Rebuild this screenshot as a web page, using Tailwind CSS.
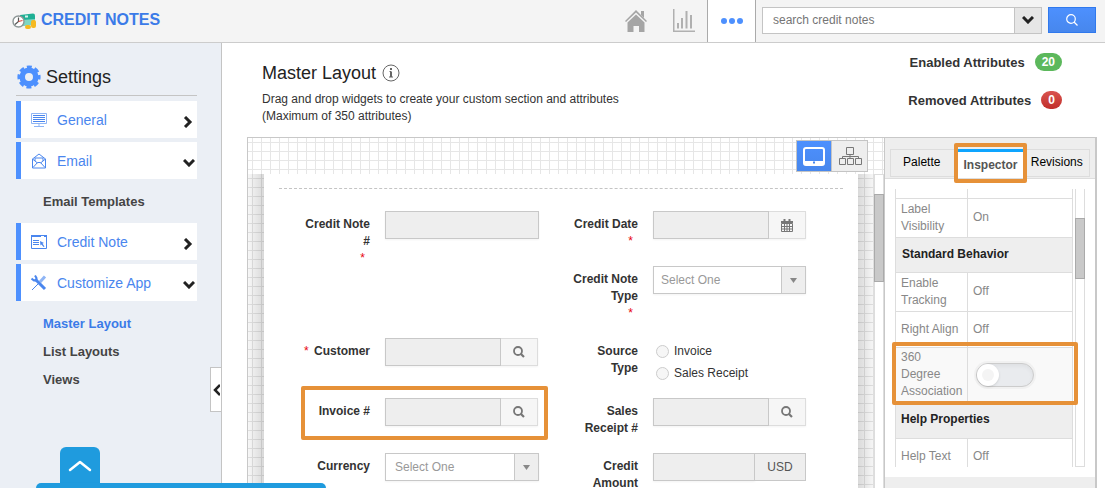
<!DOCTYPE html>
<html lang="en">
<head>
    <meta charset="UTF-8">
    <meta name="viewport" content="width=device-width, initial-scale=1.0">
    <title>Credit Notes - Master Layout</title>
    <script src="https://cdn.jsdelivr.net/npm/@tailwindcss/browser@4"></script>
</head>
<body class="h-screen overflow-hidden flex flex-col bg-white font-['Liberation_Sans',Arial,sans-serif] text-xs leading-[17px] text-[#333]">
    <!-- Header -->
    <header class="shrink-0 h-[43px] flex items-center bg-[#f4f4f4] border-b border-[#ccc] pr-[9px]">
        <a href="#" class="flex items-center gap-1 pl-3 pb-0.5 text-base font-bold text-[#3b7be8]">
            <svg class="w-[25px] h-[18px] mt-0.5" viewBox="0 0 25 18">
                <path d="M8 3l13-1.500q2 0 2 2V12l-14 2z" fill="#1fb095"/>
                <path d="M10 8l13-1v6l-13 1z" fill="#7ed6c3"/>
                <path d="M13 3.500h3v2h-3z" fill="#d8f3ec"/>
                <circle cx="6.500" cy="9.500" r="5.500" fill="#fff" stroke="#8d9696" stroke-width="1.400"/>
                <path d="M6.500 5.500v4L3 12.500" fill="none" stroke="#555" stroke-width="1.200"/>
                <path d="M6.500 9.500l4-1" stroke="#e0483e" stroke-width="1.200"/>
                <rect x="19" y="8" width="5" height="8" rx="2" fill="#f5b921"/>
                <rect x="13" y="13" width="6" height="4" rx="2" fill="#f5b921"/>
            </svg>
            CREDIT NOTES
        </a>
        <nav class="ml-auto flex h-full items-center">
            <a href="#" aria-label="Home" class="mr-6">
                <svg class="w-6 h-6" viewBox="0 0 24 24" fill="#a5a5a5">
                    <path d="M17 2h3v7l-3-3z"/>
                    <path d="M12 1L1 12l1 1L12 3.500 22 13l1-1z"/>
                    <path d="M3.500 13.500L12 5.500l8.500 8V23H15v-6H9.500v6h-6z"/>
                </svg>
            </a>
            <a href="#" aria-label="Reports" class="mr-[11px]">
                <svg class="w-6 h-6" viewBox="0 0 24 24" fill="#b0b0b0">
                    <path d="M1 0h1.500v21.500H23V23H1zM5 14h2v5.500H5zM9 9h2v10.500H9zM13.500 2h2v17.500h-2zM18 6h2v13.500h-2z"/>
                </svg>
            </a>
            <a href="#" aria-label="More" class="w-[49px] h-full flex items-center justify-center gap-0.5 bg-white border-x border-[#aaa]">
                <span class="size-1.5 rounded-full bg-[#4d90fe]"></span>
                <span class="size-1.5 rounded-full bg-[#4d90fe]"></span>
                <span class="size-1.5 rounded-full bg-[#4d90fe]"></span>
            </a>
        </nav>
        <form class="flex items-center ml-1.5 pb-0.5">
            <input type="text" aria-label="Search" placeholder="search credit notes" class="w-[253px] h-[27px] pl-2.5 bg-white border border-[#c4c4c4] placeholder:text-[#757575]">
            <button type="button" aria-label="Search options" class="w-7 h-[27px] -ml-px grid place-items-center bg-[#e6e6e6] border border-[#c4c4c4]">
                <svg class="w-3 h-2" viewBox="0 0 12 8" fill="none" stroke="#222" stroke-width="3"><path d="M1 1l5 5 5-5"/></svg>
            </button>
            <button type="submit" aria-label="Go" class="ml-1.5 w-12 h-[26px] grid place-items-center border border-[#3079ed] bg-linear-to-b from-[#4d90fe] to-[#4787ed]">
                <svg class="w-3 h-3" viewBox="0 0 12 12" fill="none" stroke="#fff" stroke-width="1.200"><circle cx="5" cy="5" r="4.300"/><path d="M8 8l3.500 3.500"/></svg>
            </button>
        </form>
    </header>

    <div class="flex-1 min-h-0 flex">
        <!-- Sidebar -->
        <aside class="relative shrink-0 w-[222px] bg-[#ebeff5] border-r border-[#c4c4c4] pl-4 pr-6 pt-5">
            <h2 class="flex items-center gap-1 h-[33px] pb-1 mb-[5px] border-b border-[#c4c4c4] text-lg text-[#222]">
                <svg class="w-[26px] h-6" viewBox="0 0 24 24" fill="none">
                    <circle cx="12" cy="12" r="6.800" stroke="#4d90fe" stroke-width="5.600"/>
                    <circle cx="12" cy="12" r="9.800" stroke="#4d90fe" stroke-width="3.600" stroke-dasharray="4.800 2.897" stroke-dashoffset="2.400"/>
                </svg>
                Settings
            </h2>
            <nav class="flex flex-col gap-1">
                <a href="#" class="h-[37px] flex items-center bg-white border-l-5 border-[#4d90fe] pl-2.5 pr-1 text-sm text-[#4a86ee]">
                    <svg class="w-4 h-4 mr-2.5" viewBox="0 0 16 16" fill="none" stroke="#4a86ee"><path d="M.5 1.500h15v10H.5z" stroke="#8fb5f5"/><path d="M2 3.500h12M2 5.500h12M2 7.500h12M2 9.500h12"/><path d="M8 12v2.500M3 14.500h10" stroke="#8fb5f5"/></svg>
                    General
                    <svg class="w-2.5 h-3 ml-auto mt-1" viewBox="0 0 10 12" fill="none" stroke="#222" stroke-width="3"><path d="M2 1l5 5-5 5"/></svg>
                </a>
                <a href="#" class="h-[37px] flex items-center bg-white border-l-5 border-[#4d90fe] pl-2.5 pr-1 text-sm text-[#4a86ee]">
                    <svg class="w-4 h-4 mr-2.5" viewBox="0 0 16 16" fill="none" stroke="#4a86ee"><path d="M1.500 6v9h13V6L8 1zM1.500 6l5 4M14.500 6l-5 4M2 14.500l4.500-5h3l4.500 5M4 8V5h8v3"/></svg>
                    Email
                    <svg class="w-3 h-2 ml-auto mt-1 -mr-0.5" viewBox="0 0 12 8" fill="none" stroke="#222" stroke-width="3"><path d="M1 1l5 5 5-5"/></svg>
                </a>
                <a href="#" class="h-9 flex items-center pl-[27px] text-[13px] font-bold text-[#444]">Email Templates</a>
                <a href="#" class="h-[37px] flex items-center bg-white border-l-5 border-[#4d90fe] pl-2.5 pr-1 text-sm text-[#4a86ee]">
                    <svg class="w-4 h-4 mr-2.5" viewBox="0 0 16 16" fill="none" stroke="#4a86ee"><path d="M.5 1.500h15v13H.5z"/><path d="M0 2h10M13 2h3" stroke-width="2"/><path d="M2 6.500h6M2 8.500h6M2 10.500h6"/><path d="M9 7l4 2-1.500.5 2 3-1 .5-2-2.500-1 1z" fill="#4a86ee" stroke="none"/></svg>
                    Credit Note
                    <svg class="w-2.5 h-3 ml-auto mt-1" viewBox="0 0 10 12" fill="none" stroke="#222" stroke-width="3"><path d="M2 1l5 5-5 5"/></svg>
                </a>
                <a href="#" class="h-[37px] flex items-center bg-white border-l-5 border-[#4d90fe] pl-2.5 pr-1 text-sm text-[#4a86ee]">
                    <svg class="w-4 h-4 mr-2.5" viewBox="0 0 16 16" fill="none" stroke="#4a86ee"><path d="M9 7l5-5.500" stroke-width="3" stroke="#8fb5f5"/><path d="M1 15l8-8"/><path d="M4 4l10 10" stroke-width="3"/><path d="M.5 3.500L3 5.500h2.500V3L4 .5" stroke-width="2"/></svg>
                    Customize App
                    <svg class="w-3 h-2 ml-auto mt-1 -mr-0.5" viewBox="0 0 12 8" fill="none" stroke="#222" stroke-width="3"><path d="M1 1l5 5 5-5"/></svg>
                </a>
            </nav>
            <nav class="flex flex-col pl-[27px] pt-2 text-[13px] font-bold text-[#444]">
                <a href="#" class="h-7 flex items-center text-[#3b7be8]">Master Layout</a>
                <a href="#" class="h-7 flex items-center">List Layouts</a>
                <a href="#" class="h-7 flex items-center">Views</a>
            </nav>
            <button type="button" aria-label="Collapse sidebar" class="absolute right-0 top-[324px] w-[11px] h-[45px] grid place-items-center bg-white border border-r-0 border-[#c4c4c4]">
                <svg class="w-2 h-3" viewBox="0 0 8 12" fill="none" stroke="#222" stroke-width="2.500"><path d="M8 1L3 6l5 5"/></svg>
            </button>
        </aside>

        <!-- Main -->
        <main class="flex-1 min-w-0 flex flex-col pl-[25px] pr-2">
            <div class="h-[94px] shrink-0 flex justify-between pl-[15px] pr-[35px]">
                <div class="pt-5">
                    <h1 class="flex items-center gap-1.5 text-lg leading-5 text-[#222] mb-2">
                        Master Layout
                        <svg class="w-[18px] h-[18px]" viewBox="0 0 18 18" fill="none" stroke="#666"><circle cx="9" cy="9" r="8"/><path d="M9 7.500V13" stroke-width="2"/><path d="M7.500 7.500H9M7 13h4"/><path d="M8 5h2" stroke-width="2"/></svg>
                    </h1>
                    <p>Drag and drop widgets to create your custom section and attributes<br>(Maximum of 350 attributes)</p>
                </div>
                <div class="pt-2.5 flex flex-col gap-5 text-[13px] font-bold">
                    <div class="flex items-center justify-end gap-2.5 h-[18px]">Enabled Attributes <span class="h-[18px] px-[7px] rounded-full bg-[#5cb85c] text-xs text-white leading-[18px]">20</span></div>
                    <div class="flex items-center justify-end gap-2.5 h-[18px]">Removed Attributes <span class="h-[18px] px-[7px] rounded-full bg-linear-to-b from-[#d9534f] to-[#c12e2a] text-xs text-white leading-[18px]">0</span></div>
                </div>
            </div>

            <div class="flex-1 min-h-0 flex border border-b-0 border-r-2 border-[#c8c8c8]">
                <!-- Canvas -->
                <section class="relative flex-1 min-w-0 flex bg-white bg-[linear-gradient(to_right,#e6e6e6_1px,transparent_1px),linear-gradient(#e6e6e6_1px,transparent_1px)] bg-size-[9px_9px] bg-position-[4px_4px]">
                    <div class="absolute right-4 top-[2px] flex">
                        <button type="button" aria-label="Device view" class="w-9 h-8 grid place-items-center border border-[#c4c4c4] bg-linear-to-b from-[#4d90fe] to-[#4787ed]">
                            <svg class="w-[22px] h-[19px]" viewBox="0 0 22 19" fill="none" stroke="#fff" stroke-width="2"><rect x="1" y="1" width="20" height="17" rx="2"/><path d="M2 15.500h18" stroke-width="3"/><path d="M10 15.500h2" stroke="#4787ed"/></svg>
                        </button>
                        <button type="button" aria-label="Tree view" class="w-9 h-8 grid place-items-center border border-l-0 border-[#c4c4c4] bg-[#eee]">
                            <svg class="w-6 h-5" viewBox="0 0 24 20" fill="none" stroke="#777"><path d="M8.500 1.500h7v7h-7zM1.500 12.500h6v6h-6zM9.500 12.500h6v6h-6zM17.500 12.500h6v6h-6zM12 8.500v4M4.500 12.500v-2h16v2"/></svg>
                        </button>
                    </div>
                    <div class="w-4 mt-9 shrink-0 bg-linear-to-r from-black/3 to-black/15"></div>
                    <!-- Form sheet -->
                    <div class="flex-1 min-w-0 mt-9 px-[15px] bg-white overflow-hidden">
                        <div class="mt-[14px] mb-[22px] border-t border-dashed border-[#c4c4c4]"></div>
                        <div class="grid grid-cols-2 pr-7">
                            <div class="flex gap-[15px] pl-[25px] min-h-[55px]">
                                <label for="cn-number" class="w-[66px] pt-[5px] text-right font-bold">Credit Note #<span class="block pr-[5px] leading-4 font-normal text-red-600">*</span></label>
                                <input id="cn-number" type="text" class="w-[154px] h-7 bg-[#eee] border border-[#c8c8c8] shadow-xs">
                            </div>
                            <div class="flex gap-[15px] pl-[25px] min-h-[55px]">
                                <label for="cn-date" class="w-[66px] pt-[5px] text-right font-bold whitespace-nowrap">Credit Date<span class="block pr-[5px] leading-4 font-normal text-red-600">*</span></label>
                                <div class="flex h-7 shadow-xs">
                                    <input id="cn-date" type="text" class="w-[116px] h-7 bg-[#eee] border border-[#c8c8c8]">
                                    <button type="button" aria-label="Pick date" class="w-[37px] h-7 grid place-items-center bg-[#f6f6f6] border border-l-0 border-[#ddd]">
                                        <svg class="w-3 h-[13px]" viewBox="0 0 12 13" fill="none" stroke="#777"><path d="M.5 4.500h11v8H.5zM3.500 5v7M6 5v7M8.500 5v7M1 7.500h10M1 10h10"/><path d="M0 3h12" stroke-width="2"/><path d="M3.500 0v3M8.500 0v3" stroke-width="2"/></svg>
                                    </button>
                                </div>
                            </div>

                            <div class="col-start-2 flex gap-[15px] pl-[25px] min-h-[72px]">
                                <label for="cn-type" class="w-[66px] pt-[5px] text-right font-bold">Credit Note Type<span class="block pr-[5px] leading-4 font-normal text-red-600">*</span></label>
                                <div class="relative w-[153px] h-7">
                                    <select id="cn-type" class="appearance-none w-full h-7 pl-[7px] bg-white border border-[#c8c8c8] text-[#999] shadow-xs"><option>Select One</option></select>
                                    <span class="pointer-events-none absolute right-px top-px w-6 h-[26px] grid place-items-center bg-[#eee] border-l border-[#c8c8c8]">
                                        <svg class="w-[7px] h-[5px]" viewBox="0 0 7 5" fill="#888"><path d="M0 0h7L3.500 5z"/></svg>
                                    </span>
                                </div>
                            </div>

                            <div class="flex gap-[15px] pl-[25px] min-h-[60px]">
                                <label for="cn-customer" class="w-[66px] pt-[5px] flex justify-between font-bold"><span class="font-normal text-red-600">*</span>Customer</label>
                                <div class="flex h-7 shadow-xs">
                                    <input id="cn-customer" type="text" class="w-[116px] h-7 bg-[#eee] border border-[#c8c8c8]">
                                    <button type="button" aria-label="Find customer" class="w-[37px] h-7 grid place-items-center bg-[#f6f6f6] border border-l-0 border-[#ddd]">
                                        <svg class="w-3 h-3" viewBox="0 0 12 12" fill="none" stroke="#777" stroke-width="1.800"><circle cx="5" cy="5" r="4"/><path d="M8 8l3 3" stroke-width="2.200"/></svg>
                                    </button>
                                </div>
                            </div>
                            <fieldset class="flex gap-[15px] pl-[25px] min-h-[60px]">
                                <legend class="float-left w-[66px] pt-[5px] text-right font-bold">Source Type</legend>
                                <div class="flex flex-col gap-[5px] pt-[5px] pl-[3px]">
                                    <label class="flex items-center gap-[5px]"><input type="radio" name="source" class="appearance-none size-[13px] rounded-full border border-[#ccc] bg-[#f6f6f6]">Invoice</label>
                                    <label class="flex items-center gap-[5px]"><input type="radio" name="source" class="appearance-none size-[13px] rounded-full border border-[#ccc] bg-[#f6f6f6]">Sales Receipt</label>
                                </div>
                            </fieldset>

                            <div class="relative flex gap-[15px] pl-[25px] min-h-[55px]">
                                <label for="cn-invoice" class="w-[66px] pt-[5px] text-right font-bold">Invoice #</label>
                                <div class="flex h-7 shadow-xs">
                                    <input id="cn-invoice" type="text" class="w-[116px] h-7 bg-[#eee] border border-[#c8c8c8]">
                                    <button type="button" aria-label="Find invoice" class="w-[37px] h-7 grid place-items-center bg-[#f6f6f6] border border-l-0 border-[#ddd]">
                                        <svg class="w-3 h-3" viewBox="0 0 12 12" fill="none" stroke="#777" stroke-width="1.800"><circle cx="5" cy="5" r="4"/><path d="M8 8l3 3" stroke-width="2.200"/></svg>
                                    </button>
                                </div>
                                <div class="pointer-events-none absolute left-[22px] -top-3 w-[247px] h-[54px] border-4 border-[#e69138] rounded-xs"></div>
                            </div>
                            <div class="flex gap-[15px] pl-[25px] min-h-[55px]">
                                <label for="cn-receipt" class="w-[66px] pt-[5px] text-right font-bold">Sales Receipt&nbsp;#</label>
                                <div class="flex h-7 shadow-xs">
                                    <input id="cn-receipt" type="text" class="w-[116px] h-7 bg-[#eee] border border-[#c8c8c8]">
                                    <button type="button" aria-label="Find receipt" class="w-[37px] h-7 grid place-items-center bg-[#f6f6f6] border border-l-0 border-[#ddd]">
                                        <svg class="w-3 h-3" viewBox="0 0 12 12" fill="none" stroke="#777" stroke-width="1.800"><circle cx="5" cy="5" r="4"/><path d="M8 8l3 3" stroke-width="2.200"/></svg>
                                    </button>
                                </div>
                            </div>

                            <div class="flex gap-[15px] pl-[25px]">
                                <label for="cn-currency" class="w-[66px] pt-[5px] text-right font-bold">Currency</label>
                                <div class="relative w-[154px] h-7">
                                    <select id="cn-currency" class="appearance-none w-full h-7 pl-[9px] bg-white border border-[#c8c8c8] text-[#999] shadow-xs"><option>Select One</option></select>
                                    <span class="pointer-events-none absolute right-px top-px w-6 h-[26px] grid place-items-center bg-[#eee] border-l border-[#c8c8c8]">
                                        <svg class="w-[7px] h-[5px]" viewBox="0 0 7 5" fill="#888"><path d="M0 0h7L3.500 5z"/></svg>
                                    </span>
                                </div>
                            </div>
                            <div class="flex gap-[15px] pl-[25px]">
                                <label for="cn-amount" class="w-[66px] pt-[5px] text-right font-bold">Credit Amount</label>
                                <div class="flex h-7">
                                    <input id="cn-amount" type="text" class="w-[102px] h-7 bg-[#eee] border border-[#c8c8c8] shadow-xs">
                                    <span class="w-[51px] h-7 grid place-items-center bg-[#eee] border border-l-0 border-[#c8c8c8] text-[#555]">USD</span>
                                </div>
                            </div>
                        </div>
                    </div>
                    <div class="w-4 mt-9 shrink-0 bg-linear-to-l from-black/3 to-black/15"></div>
                    <div class="w-2.5 mt-9 shrink-0 bg-white border-x border-t border-[#ddd]">
                        <div class="mt-[19px] -mx-px h-[88px] bg-[#c9c9c9] border border-[#aaa]"></div>
                    </div>
                </section>

                <!-- Inspector panel -->
                <section class="shrink-0 w-[211px] flex flex-col bg-[#eee] border-l border-[#c8c8c8]">
                    <div class="flex pt-[11px] px-[5px] h-[41px] border-b border-[#ddd]">
                        <button type="button" class="w-[69px] h-7 pb-px pr-1 bg-[#eee] border border-[#ddd] text-black">Palette</button>
                        <div class="relative z-10">
                            <button type="button" class="w-[66px] h-[29px] bg-white border-t-3 border-[#0ea5ff] font-bold text-[#555]">Inspector</button>
                            <div class="pointer-events-none absolute -left-1 -top-1.5 w-[73px] h-10 border-4 border-[#e69138] rounded-xs"></div>
                        </div>
                        <button type="button" class="w-[68px] h-7 pb-px bg-[#eee] border border-[#ddd] text-black">Revisions</button>
                    </div>
                    <div class="relative flex h-[298px] p-2.5 gap-0.5 bg-white">
                        <div class="w-[179px] h-[278px] overflow-hidden">
                            <table class="w-full table-fixed border-collapse border-x border-[#ddd] text-[#888]">
                                <colgroup><col class="w-[72px]"><col></colgroup>
                                <tbody>
                                    <tr class="h-[9px] border-b border-[#ddd]"><td class="border-r border-[#ddd]"></td><td></td></tr>
                                    <tr class="h-[39px] border-b border-[#ddd]"><td class="pl-[5px] border-r border-[#ddd]">Label Visibility</td><td class="pl-[5px]">On</td></tr>
                                    <tr class="h-[35px] border-b border-[#ddd] bg-[#eee]"><th colspan="2" class="pl-1.5 text-left font-bold text-[#222]">Standard Behavior</th></tr>
                                    <tr class="h-[39px] border-b border-[#ddd]"><td class="pl-[5px] border-r border-[#ddd]">Enable Tracking</td><td class="pl-[5px]">Off</td></tr>
                                    <tr class="h-9 border-b border-[#ddd]"><td class="pl-[5px] border-r border-[#ddd]">Right Align</td><td class="pl-[5px]">Off</td></tr>
                                    <tr class="h-[55px] bg-[#f9f9f9]">
                                        <td class="pl-[5px] border-r border-[#ddd]"><label for="association">360<br>Degree Association</label></td>
                                        <td class="pl-1.5">
                                            <span class="relative block w-[62px] h-7 rounded-full bg-[#f1f1f1] p-0.5">
                                                <input id="association" type="checkbox" role="switch" class="appearance-none block w-[58px] h-6 rounded-full bg-[#e9ebee] border border-[#ccc] shadow-inner">
                                                <span class="pointer-events-none absolute left-[3px] top-[3px] size-[22px] rounded-full bg-white shadow-sm p-[5px]"><span class="block size-3 rounded-full bg-[#f4f4f4]"></span></span>
                                            </span>
                                        </td>
                                    </tr>
                                    <tr class="h-9 border-b border-[#ddd] bg-[#eee]"><th colspan="2" class="pl-[5px] text-left font-bold text-[#222]">Help Properties</th></tr>
                                    <tr class="h-9"><td class="pl-[5px] border-r border-[#ddd]">Help Text</td><td class="pl-[5px]">Off</td></tr>
                                </tbody>
                            </table>
                        </div>
                        <div class="w-2.5 h-[278px] bg-white border border-t-0 border-[#ddd]">
                            <div class="mt-[29px] -mx-px h-[61px] bg-[#c9c9c9] border border-[#aaa]"></div>
                        </div>
                        <div class="pointer-events-none absolute left-[7px] top-[163px] w-[186px] h-[63px] border-4 border-[#e69138] rounded-xs"></div>
                    </div>
                </section>
            </div>
        </main>
    </div>

    <!-- Pull-up drawer -->
    <div class="fixed bottom-0 left-9 w-[290px]">
        <button type="button" aria-label="Open drawer" class="ml-6 w-10 h-9 pt-0.5 grid place-items-center rounded-t-md bg-[#1f9bde]">
            <svg class="w-6 h-3" viewBox="0 0 24 12" fill="none" stroke="#fff" stroke-width="2.500" stroke-linecap="round" stroke-linejoin="round"><path d="M2 10l10-8 10 8"/></svg>
        </button>
        <div class="h-[5px] rounded-t-md bg-[#1f9bde] shadow-md"></div>
    </div>
</body>
</html>
